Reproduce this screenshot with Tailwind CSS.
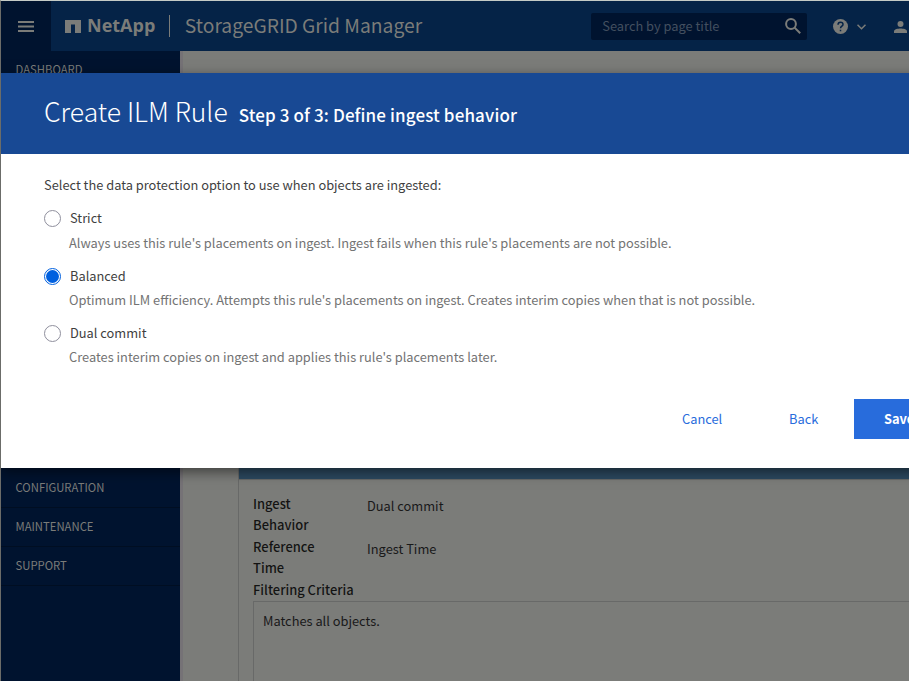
<!DOCTYPE html>
<html lang="en">
<head>
<meta charset="utf-8">
<title>StorageGRID Grid Manager</title>
<script src="https://cdn.jsdelivr.net/npm/@tailwindcss/browser@4"></script>
</head>
<body class="bg-[#7b7c79] overflow-hidden font-['Noto_Sans_CJK_SC',sans-serif] text-[12.84px] leading-[21px]">
<div class="relative flex h-[681px] w-[909px] flex-col overflow-hidden border-l border-t border-l-[#6b6c69] border-t-[#c5cbc6]">
  <header class="flex h-[50px] w-[930px] shrink-0 items-center bg-[#052347] text-[#7b7c79]">
    <button class="flex h-[50px] w-[50px] items-center justify-center bg-[#00132f]" aria-label="Menu">
      <svg class="mt-[2px] h-3 w-4" viewBox="0 0 16 12" fill="currentColor"><path d="M0 0h16v2H0zM0 4.500h16v2H0zM0 9h16v2H0z"/></svg>
    </button>
    <svg class="ml-[14px] h-[13px] w-4" viewBox="0 0 16 13" fill="currentColor"><path d="M0 0h16v13h-6V4.500H6V13H0z"/></svg>
    <span class="ml-[6px] pb-[2px] text-[18px] font-bold font-['Open_Sans',sans-serif]">NetApp</span>
    <span class="ml-[14px] h-[22px] w-px bg-[#7b7c79]"></span>
    <span class="ml-[14.500px] w-[406.500px] pb-[2px] text-[19.25px] whitespace-nowrap">StorageGRID Grid Manager</span>
    <div class="flex h-[27px] w-[216px] shrink-0 items-center justify-between rounded-[2px] bg-[#00132f] pr-[6px] pl-[11px] text-[#434f5f]">
      <span class="pb-px">Search by page title</span>
      <svg class="h-4 w-4 text-[#7b7c79]" viewBox="0 0 16 16" fill="none" stroke="currentColor" stroke-width="2"><circle cx="6" cy="6" r="4.900"/><path d="m9.600 9.600 5.600 5.600"/></svg>
    </div>
    <svg class="mt-px ml-[26px] h-[15px] w-[15px] shrink-0" viewBox="0 0 15 15"><circle cx="7.500" cy="7.500" r="7.500" fill="currentColor"/><path d="M5 5.800C5 4.200 6 3.200 7.500 3.200S10 4.100 10 5.400C10 7.100 7.500 7.200 7.500 9.300M7.500 10.700v1.600" fill="none" stroke="#052347" stroke-width="1.500"/></svg>
    <svg class="mt-[2px] ml-[9px] h-[6px] w-[9px] shrink-0" viewBox="0 0 9 6" fill="none" stroke="currentColor" stroke-width="1.500"><path d="m.5.7 4 4 4-4"/></svg>
    <svg class="mt-[2px] ml-[28px] h-3 w-[13px] shrink-0" viewBox="0 0 13 12" fill="currentColor"><circle cx="6.500" cy="3" r="3"/><path d="M0 12v-1.600C0 8.300 4 7.600 6.500 7.600s6.500.7 6.500 2.800V12z"/></svg>
  </header>
  <div class="flex min-h-0 flex-1">
    <nav class="flex w-[179px] shrink-0 flex-col bg-[#00132f] text-[11.3px] text-[#7b7c79]">
      <span class="h-[417px] shrink-0 pt-[8px] pl-[14.500px]">DASHBOARD</span>
      <span class="flex h-[40px] items-center border-b border-[#000e22] pl-[14.500px]">CONFIGURATION</span>
      <span class="flex h-[39px] items-center border-b border-[#000e22] pb-[2px] pl-[14.500px]">MAINTENANCE</span>
      <span class="flex h-[39px] items-center border-b border-[#000e22] pb-[2px] pl-[14.500px]">SUPPORT</span>
    </nav>
    <main class="min-w-0 flex-1 border-l-[3px] border-[#757276] pl-[55px] text-[#191919]">
      <div class="h-[380px]"></div>
      <section class="border-l border-[#686968]">
        <div class="h-[49px] border-b border-[#686968] bg-[#2c4960]"></div>
        <div class="grid grid-cols-[114px_1fr] pt-[13px] pl-[14px]">
          <b class="h-[43px] w-[80px] text-[12.95px] font-medium text-black/85">Ingest Behavior</b><span class="pt-[2px]">Dual commit</span>
          <b class="h-[43px] w-[80px] text-[12.95px] font-medium text-black/85">Reference Time</b><span class="pt-[2px]">Ingest Time</span>
          <b class="col-span-2 h-[22px] text-[12.95px] font-medium text-black/85">Filtering Criteria</b>
          <div class="col-span-2 h-[100px] border-t border-l border-[#686968] pt-[8px] pl-[9px]">Matches all objects.</div>
        </div>
      </section>
    </main>
  </div>
  <div class="absolute top-[72px] left-0 flex h-[395px] w-[930px] flex-col bg-white shadow-[0_4px_12px_rgba(0,0,0,0.5)]" role="dialog">
    <div class="flex h-[81px] items-baseline bg-[#184994] pt-[18px] pl-[43px] leading-[40px] text-white">
      <h1 class="text-[26.5px] font-light">Create ILM Rule</h1><span class="ml-[11px] text-[17px] font-medium tracking-[0.12px]">Step 3 of 3: Define ingest behavior</span>
    </div>
    <div class="flex flex-col pt-[20px] pl-[43px] text-[#3f3f3f]">
      <p>Select the data protection option to use when objects are ingested:</p>
      <label class="mt-[12px] flex items-center gap-[9px]"><i class="mt-px size-[17px] rounded-full border border-[#8f8f9d]"></i>Strict</label>
      <p class="mt-[4px] pl-[25px] text-[#737373]">Always uses this rule's placements on ingest. Ingest fails when this rule's placements are not possible.</p>
      <label class="mt-[12px] flex items-center gap-[9px]"><i class="mt-px flex size-[17px] items-center justify-center rounded-full border border-[#0060df]"><i class="size-[13px] rounded-full bg-[#0060df]"></i></i>Balanced</label>
      <p class="mt-[3px] pl-[25px] text-[#737373]">Optimum ILM efficiency. Attempts this rule's placements on ingest. Creates interim copies when that is not possible.</p>
      <label class="mt-[12px] flex items-center gap-[9px]"><i class="mt-px size-[17px] rounded-full border border-[#8f8f9d]"></i>Dual commit</label>
      <p class="mt-[3px] pl-[25px] text-[#737373]">Creates interim copies on ingest and applies this rule's placements later.</p>
    </div>
    <div class="mt-[32px] flex h-[40px] items-center pl-[681px] text-[#286cdc]">
      <button class="w-[107px] pb-px text-left">Cancel</button><button class="w-[65px] pb-px text-left">Back</button>
      <button class="h-[40px] flex-1 bg-[#286cdc] pb-px pl-[30px] text-left font-bold text-white">Save</button>
    </div>
  </div>
</div>
</body>
</html>
